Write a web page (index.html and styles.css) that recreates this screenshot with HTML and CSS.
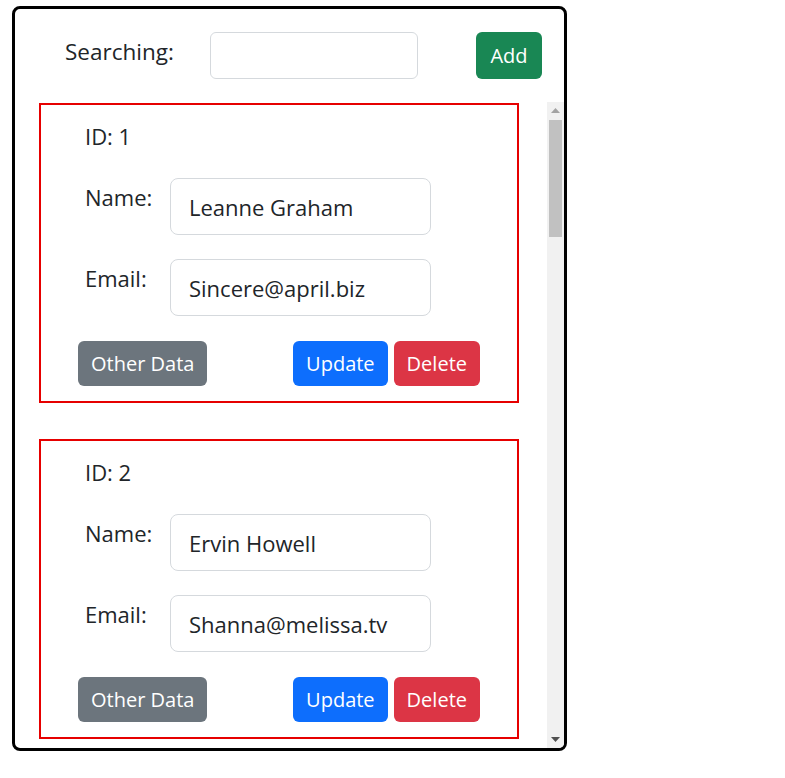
FILE: index.html
```html
<!DOCTYPE html>
<html lang="en">
<head>
<meta charset="utf-8">
<title>Users</title>
<link rel="stylesheet" href="styles.css">
</head>
<body>
<div class="app">
  <div class="search-bar">
    <label class="search-label" for="search">Searching:</label>
    <input id="search" class="search-input" type="text">
    <button class="btn btn-green">Add</button>
  </div>
  <div class="list-wrap">
    <div class="list">
      <div class="card">
        <div class="card-id">ID: 1</div>
        <div class="field"><label class="field-label">Name:</label><input class="field-input" type="text" value="Leanne Graham"></div>
        <div class="field"><label class="field-label">Email:</label><input class="field-input" type="text" value="Sincere@april.biz"></div>
        <div class="actions"><button class="btn btn-gray">Other Data</button><span class="spacer"></span><button class="btn btn-blue">Update</button><button class="btn btn-red">Delete</button></div>
      </div>
      <div class="card">
        <div class="card-id">ID: 2</div>
        <div class="field"><label class="field-label">Name:</label><input class="field-input" type="text" value="Ervin Howell"></div>
        <div class="field"><label class="field-label">Email:</label><input class="field-input" type="text" value="Shanna@melissa.tv"></div>
        <div class="actions"><button class="btn btn-gray">Other Data</button><span class="spacer"></span><button class="btn btn-blue">Update</button><button class="btn btn-red">Delete</button></div>
      </div>
    </div>
    <div class="scrollbar" aria-hidden="true">
      <div class="sb-btn">
        <svg width="9" height="5" viewBox="0 0 9 5"><path d="M0 5 L4.5 0 L9 5 Z" fill="#a3a3a3"/></svg>
      </div>
      <div class="sb-track"><div class="sb-thumb"></div></div>
      <div class="sb-btn">
        <svg width="9" height="5" viewBox="0 0 9 5"><path d="M0 0 L4.5 5 L9 0 Z" fill="#505050"/></svg>
      </div>
    </div>
  </div>
</div>
</body>
</html>
```

FILE: styles.css
```css
* {
  box-sizing: border-box;
}

html, body {
  margin: 0;
  background: #fff;
}

body {
  font-family: "Open Sans", "Noto Sans", sans-serif;
  color: #212529;
}

.app {
  margin: 6px 0 0 12px;
  width: 555px;
  height: 745px;
  border: 3px solid #000;
  border-radius: 8px;
  display: flex;
  flex-direction: column;
  overflow: hidden;
}

.search-bar {
  display: flex;
  align-items: flex-start;
  padding: 23px 22px 0 50px;
  height: 93px;
  flex: none;
}

.search-label {
  width: 145px;
  font-size: 22.5px;
  line-height: 33px;
  margin-top: 3px;
}

.search-input {
  width: 208px;
  height: 47px;
  border: 1px solid #d5d9dd;
  border-radius: 6px;
  font: inherit;
  font-size: 22px;
  padding: 0 16px;
  outline: none;
}

.btn {
  font-family: inherit;
  font-size: 20px;
  color: #fff;
  border: none;
  border-radius: 6px;
  height: 45px;
  padding: 0 13px;
  cursor: pointer;
}

.btn-green {
  background: #198754;
  height: 47px;
  margin-left: 58px;
  padding: 0 14.5px;
}

.btn-gray {
  background: #6c757d;
}

.btn-blue {
  background: #0d6efd;
}

.btn-red {
  background: #dc3545;
  margin-left: 6px;
}

.list-wrap {
  flex: 1;
  display: flex;
  min-height: 0;
}

.list {
  flex: 1;
  overflow: hidden;
  padding: 1px 0 0 24px;
}

.scrollbar {
  width: 17px;
  flex: none;
  display: flex;
  flex-direction: column;
  background: #f1f1f1;
}

.sb-btn {
  height: 17px;
  display: flex;
  align-items: center;
  justify-content: center;
  flex: none;
}

.sb-track {
  flex: 1;
  padding: 1px 2px 0;
}

.sb-thumb {
  height: 117px;
  background: #c1c1c1;
}

.card {
  width: 480px;
  height: 300px;
  border: 2px solid #e60000;
  padding: 15px 37px 0 37px;
  margin-bottom: 36px;
}

.card-id {
  font-size: 22px;
  line-height: 33px;
  padding-left: 7px;
}

.field {
  display: flex;
  align-items: flex-start;
  margin-top: 25px;
  padding-left: 7px;
}

.field + .field {
  margin-top: 24px;
}

.field-label {
  width: 85px;
  font-size: 22px;
  line-height: 33px;
  margin-top: 3px;
}

.field-input {
  width: 261px;
  height: 57px;
  border: 1px solid #d5d9dd;
  border-radius: 8px;
  font-family: inherit;
  font-size: 22px;
  color: #212529;
  padding: 0 18px;
  outline: none;
}

.actions {
  display: flex;
  margin-top: 25px;
}

.spacer {
  flex: 1;
}
```
